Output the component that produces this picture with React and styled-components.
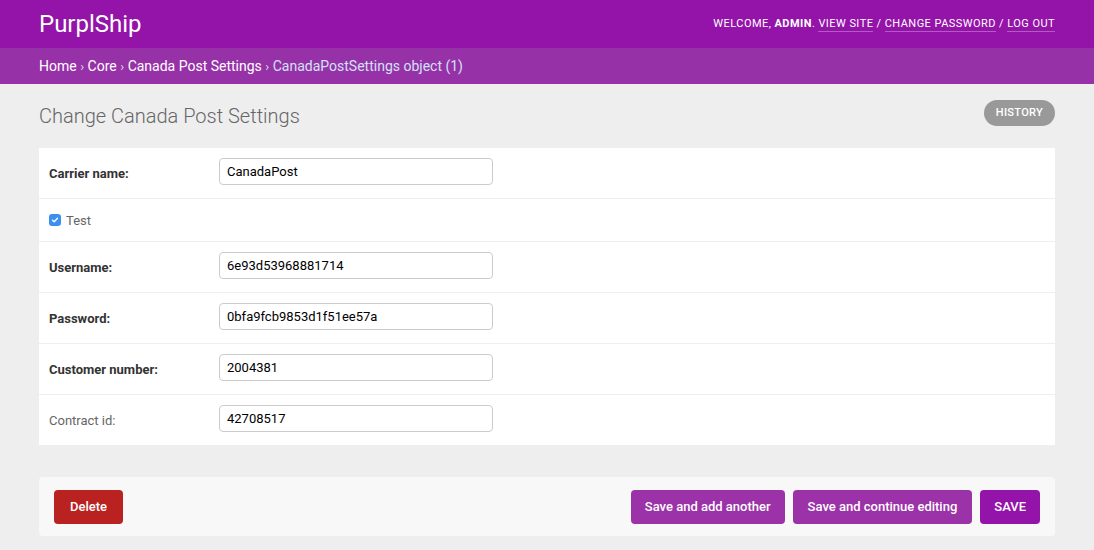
import styled, { createGlobalStyle } from "styled-components";

const Global = createGlobalStyle`
    body {
        margin: 0;
        background: #eeeeee;
        font-family: Roboto, "Liberation Sans", sans-serif;
        color: #333;
    }
`

const Header = styled.div`
    height: 48px;
    background: #9413a9;
    display: flex;
    align-items: center;
    justify-content: space-between;
    padding: 0 39px;
`

const Brand = styled.div`
    font-size: 24px;
    font-weight: 400;
    color: #fff;
    margin-top: -1px;
`

const Tools = styled.div`
    font-size: 11px;
    color: #ffffff;
    text-transform: uppercase;
    letter-spacing: 0.45px;
    margin-top: -1px;
    b { font-weight: 700; }
`

const ToolLink = styled.span`
    border-bottom: 1px solid rgba(255,255,255,0.3);
    padding-bottom: 1px;
`

const Crumbs = styled.div`
    height: 36px;
    background: #9731a8;
    display: flex;
    align-items: center;
    padding: 0 39px;
    font-size: 14px;
    color: #fff;
    gap: 3.5px;
`

const Crumb = styled.span`
    color: ${props => props.current ? "#cfe2f3" : "#fff"};
`

const Sep = styled.span`
    color: #ddd;
    font-size: 13px;
`

const Main = styled.div`
    padding: 0 39px;
`

const TitleRow = styled.div`
    display: flex;
    justify-content: space-between;
    align-items: center;
    height: 64px;
`

const Title = styled.h1`
    margin: 0;
    font-size: 20px;
    font-weight: 300;
    color: #666;
`

const History = styled.span`
    background: #999;
    color: #fff;
    font-size: 11px;
    font-weight: 500;
    letter-spacing: 0.3px;
    border-radius: 13px;
    padding: 6px 12px 7px;
    margin-top: -6px;
`

const Card = styled.div`
    background: #fff;
`

const Row = styled.div`
    display: flex;
    align-items: center;
    height: ${props => props.h}px;
    padding: 0 10px;
    border-bottom: ${props => props.last ? "none" : "1px solid #eee"};
    box-sizing: border-box;
`

const Label = styled.label`
    width: 170px;
    font-size: 13px;
    font-weight: ${props => props.required ? 700 : 400};
    color: ${props => props.required ? "#333" : "#666"};
`

const Input = styled.div`
    width: 274px;
    height: 27px;
    margin-top: -3px;
    box-sizing: border-box;
    border: 1px solid #ccc;
    border-radius: 4px;
    padding: 0 7px;
    display: flex;
    align-items: center;
    font-size: 13px;
    color: #000;
`

const Check = styled.span`
    width: 12px;
    height: 12px;
    border-radius: 3px;
    background: #3c8ef0;
    display: inline-flex;
    align-items: center;
    justify-content: center;
    margin-right: 5px;
`

const CheckLabel = styled.span`
    font-size: 13px;
    color: #666;
`

const Submit = styled.div`
    margin-top: 32px;
    background: #f8f8f8;
    border-radius: 4px;
    height: 59px;
    display: flex;
    align-items: center;
    justify-content: space-between;
    padding: 0 15px;
`

const Btns = styled.div`
    display: flex;
    gap: 8px;
`

const Btn = styled.div`
    height: 34px;
    display: flex;
    align-items: center;
    padding: 0 ${props => props.pad || 14}px;
    border-radius: 4px;
    color: #fff;
    font-size: 13px;
    font-weight: 500;
    background: ${props => props.bg};
`

const fields = [
    { label: "Carrier name:", value: "CanadaPost", required: true, h: 51 },
    { check: "Test", h: 43 },
    { label: "Username:", value: "6e93d53968881714", required: true, h: 51 },
    { label: "Password:", value: "0bfa9fcb9853d1f51ee57a", required: true, h: 51 },
    { label: "Customer number:", value: "2004381", required: true, h: 51 },
    { label: "Contract id:", value: "42708517", h: 50 },
]

export default function App() {
    return <>
        <Global />
        <Header>
            <Brand>PurplShip</Brand>
            <Tools>
                Welcome, <b>admin</b>. <ToolLink>View site</ToolLink> / <ToolLink>Change password</ToolLink> / <ToolLink>Log out</ToolLink>
            </Tools>
        </Header>
        <Crumbs>
            <Crumb>Home</Crumb><Sep>›</Sep>
            <Crumb>Core</Crumb><Sep>›</Sep>
            <Crumb>Canada Post Settings</Crumb><Sep>›</Sep>
            <Crumb current>CanadaPostSettings object (1)</Crumb>
        </Crumbs>
        <Main>
            <TitleRow>
                <Title>Change Canada Post Settings</Title>
                <History>HISTORY</History>
            </TitleRow>
            <Card>
                {fields.map((f, i) => (
                    <Row key={i} h={f.h} last={i === fields.length - 1}>
                        {f.check ? <>
                            <Check>
                                <svg width="8" height="8" viewBox="0 0 8 8">
                                    <path d="M1.5 4.2 L3.2 5.8 L6.5 2.2" stroke="#fff" strokeWidth="1.4" fill="none" strokeLinecap="round" strokeLinejoin="round" />
                                </svg>
                            </Check>
                            <CheckLabel>{f.check}</CheckLabel>
                        </> : <>
                            <Label required={f.required}>{f.label}</Label>
                            <Input>{f.value}</Input>
                        </>}
                    </Row>
                ))}
            </Card>
            <Submit>
                <Btn bg="#ba2121" pad={16}>Delete</Btn>
                <Btns>
                    <Btn bg="#9b32a8">Save and add another</Btn>
                    <Btn bg="#9b32a8" pad={15}>Save and continue editing</Btn>
                    <Btn bg="#9413a9">SAVE</Btn>
                </Btns>
            </Submit>
        </Main>
    </>
}
